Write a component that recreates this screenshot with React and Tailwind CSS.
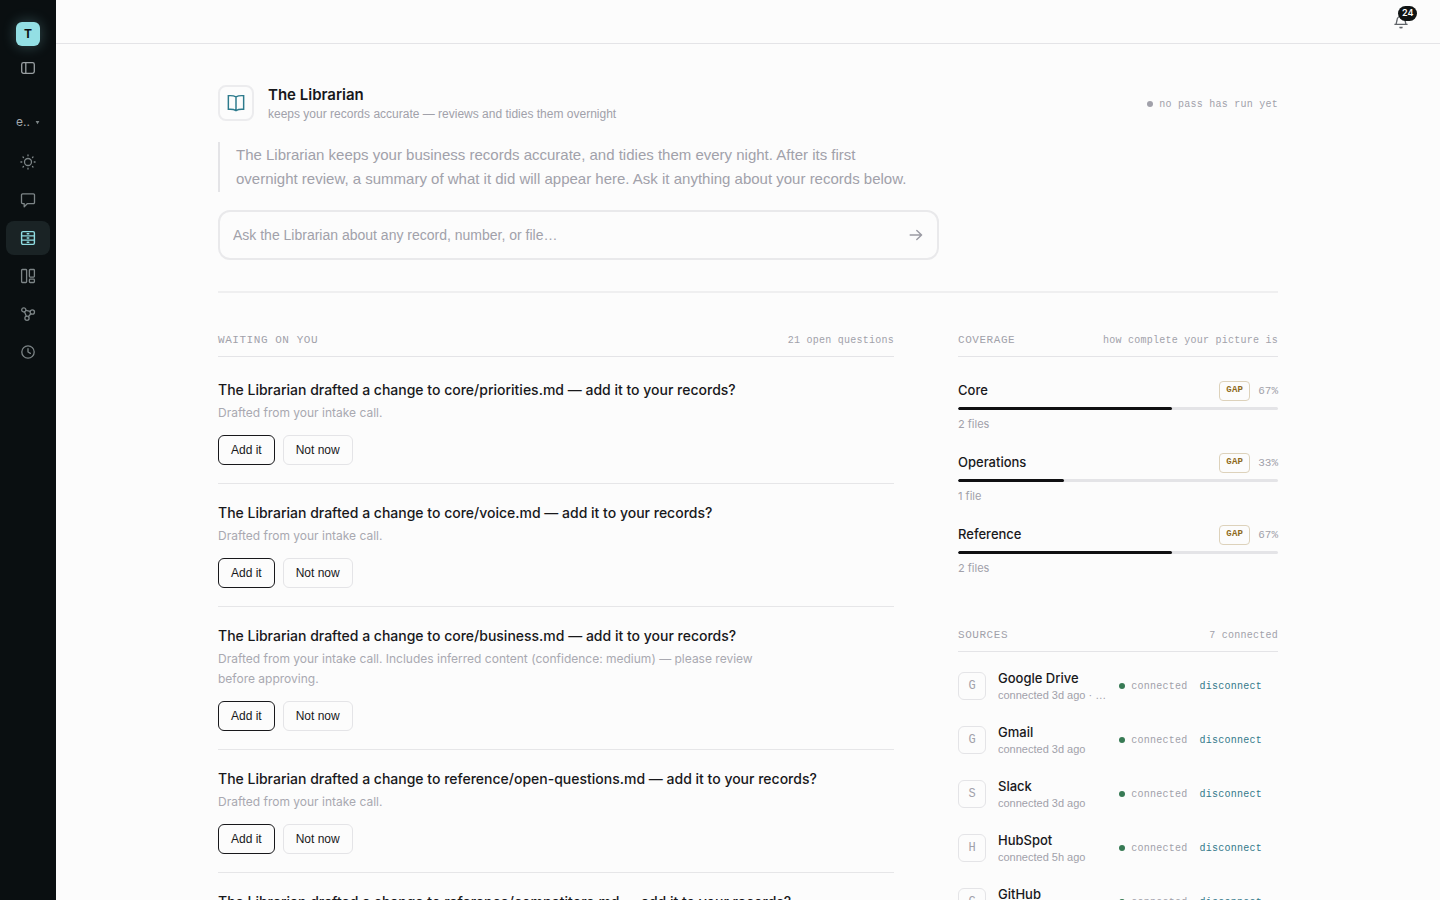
import React from "react";

const ICON = {
  width: 16,
  height: 16,
  viewBox: "0 0 16 16",
  fill: "none",
  stroke: "currentColor",
  strokeWidth: 1.3,
  strokeLinecap: "round",
  strokeLinejoin: "round",
  "aria-hidden": true,
};

const PanelIcon = () => (
  <svg {...ICON}>
    <rect x="1.7" y="2.6" width="12.6" height="10.8" rx="1.8" />
    <path d="M5.8 2.6v10.8" />
  </svg>
);
const SunIcon = () => (
  <svg {...ICON}>
    <circle cx="8" cy="8" r="3.5" />
    <path d="M8 .9v.9M8 14.2v.9M.9 8h.9M14.2 8h.9M3 3l.5.5M12.5 12.5l.5.5M3 13l.5-.5M12.5 3.5L13 3" />
  </svg>
);
const ChatIcon = () => (
  <svg {...ICON}>
    <path d="M2.6 1.9h10.8a1.1 1.1 0 0 1 1.1 1.1v7.6a1.1 1.1 0 0 1-1.1 1.1H7.2L4.2 14.8v-3.1H2.6a1.1 1.1 0 0 1-1.1-1.1V3a1.1 1.1 0 0 1 1.1-1.1z" />
  </svg>
);
const CabinetIcon = () => (
  <svg {...ICON} strokeWidth="1.4">
    <rect x="1.6" y="1.6" width="12.8" height="12.8" rx="1.3" />
    <path d="M1.6 5.9h12.8M1.6 10.1h12.8M7.2 3.8h1.6M7.2 8h1.6M7.2 12.2h1.6" />
  </svg>
);
const BoardIcon = () => (
  <svg {...ICON}>
    <rect x="1.6" y="1.5" width="5" height="13" rx=".8" />
    <rect x="9.4" y="1.5" width="5" height="7.6" rx=".8" />
    <rect x="9.4" y="11.2" width="5" height="3.3" rx=".8" />
  </svg>
);
const GraphIcon = () => (
  <svg {...ICON}>
    <circle cx="3.8" cy="3.9" r="2.1" />
    <circle cx="12.3" cy="6" r="2.2" />
    <circle cx="7" cy="12.3" r="2.1" />
    <path d="M5.9 4.4l4.3 1M4.6 5.9l1.7 4.4M10.9 7.7l-2.6 3" />
  </svg>
);
const ClockIcon = () => (
  <svg {...ICON}>
    <circle cx="8" cy="8" r="6.2" />
    <path d="M8 4.6V8l2.4 1.4" />
  </svg>
);
const BellIcon = () => (
  <svg {...ICON} strokeLinecap="butt" strokeLinejoin="miter">
    <path d="M1.4 10.4h13.2M3 10.4l1-4a4 4 0 0 1 8 0l1 4" />
    <path d="M6.4 13.5h3.2M8 12.9v1.6" />
  </svg>
);
const BookIcon = () => (
  <svg {...ICON} width="18" height="18" strokeWidth="1.3" strokeLinejoin="miter">
    <path d="M8 2.6C6.3 1.6 3.6 1.3 1.2 1.5v12.1c2.6-.2 5.1.1 6.8 1.1 1.7-1 4.2-1.3 6.8-1.1V1.5C12.4 1.3 9.7 1.6 8 2.6zM8 2.6v12" />
  </svg>
);
const ArrowIcon = () => (
  <svg {...ICON} strokeWidth="1.4">
    <path d="M2.2 8h11.4M8.8 3.4L13.6 8l-4.8 4.6" />
  </svg>
);

const NAV = [
  { label: "Today", Icon: SunIcon },
  { label: "Chat", Icon: ChatIcon },
  { label: "Records", Icon: CabinetIcon, active: true },
  { label: "Boards", Icon: BoardIcon },
  { label: "Graph", Icon: GraphIcon },
  { label: "History", Icon: ClockIcon },
];

const QUESTIONS = [
  { file: "core/priorities.md" },
  { file: "core/voice.md" },
  {
    file: "core/business.md",
    note: " Includes inferred content (confidence: medium) — please review before approving.",
  },
  { file: "reference/open-questions.md" },
  { file: "reference/competitors.md" },
];

const COVERAGE = [
  { name: "Core", value: 67, files: "2 files" },
  { name: "Operations", value: 33, files: "1 file" },
  { name: "Reference", value: 67, files: "2 files" },
];

const SOURCES = [
  { name: "Google Drive", detail: "connected 3d ago · synced" },
  { name: "Gmail", detail: "connected 3d ago" },
  { name: "Slack", detail: "connected 3d ago" },
  { name: "HubSpot", detail: "connected 5h ago" },
  { name: "GitHub", detail: "connected 5h ago" },
];

const MONO = "font-['Liberation_Mono',monospace]";
const BODY = "font-['Liberation_Sans',sans-serif]";

function Sidebar() {
  return (
    <aside className="flex w-14 shrink-0 flex-col items-center bg-[#0a0f11] pt-[22px] text-[#7d8587]">
      <div className="flex size-6 items-center justify-center rounded-md bg-[#93dfe4] text-xs font-bold text-[#0a0f11] shadow-[0_0_14px_rgba(147,223,228,0.3)]">
        T
      </div>
      <button type="button" aria-label="Toggle sidebar" className="mt-[14px] text-[#9aa0a3]">
        <PanelIcon />
      </button>
      <button
        type="button"
        aria-label="Switch workspace"
        className="mt-[38px] flex h-4 w-full items-center justify-between pr-4 pl-4 text-xs text-[#a3a9ac]"
      >
        <span>e..</span>
        <svg width="5" height="5" viewBox="0 0 5 5" fill="#7d8587" aria-hidden="true">
          <path d="M.6 1h3.8L2.5 4.2z" />
        </svg>
      </button>
      <nav aria-label="Main" className="mt-[15px] flex w-full flex-col gap-1 px-[6px]">
        {NAV.map(({ label, Icon, active }) => (
          <a
            key={label}
            href="#"
            aria-label={label}
            aria-current={active ? "page" : undefined}
            className={
              active
                ? "flex h-[34px] items-center justify-center rounded-lg bg-[#1a2325] text-[#8fdce2]"
                : "flex h-[34px] items-center justify-center rounded-lg"
            }
          >
            <Icon />
          </a>
        ))}
      </nav>
    </aside>
  );
}

function SectionHeader({ title, aside }) {
  return (
    <div className={`flex items-baseline justify-between border-b border-[#e4e4e7] pb-[7px] ${MONO}`}>
      <h2 className="text-[11px] leading-4 tracking-wider text-[#a1a1aa]">{title}</h2>
      <span className="text-[10px] leading-4 tracking-wide text-[#a1a1aa]">{aside}</span>
    </div>
  );
}

function Question({ file, note = "" }) {
  return (
    <li className="border-b border-[#e6e6e8] pt-[18px] pb-[18px]">
      <h3 className="text-sm leading-[22px] font-medium text-[#18181b]">
        The Librarian drafted a change to {file} — add it to your records?
      </h3>
      <p className="mt-[2px] max-w-[560px] text-xs leading-5 text-[#a9a9b1]">
        Drafted from your intake call.{note}
      </p>
      <div className={`mt-3 flex gap-2 text-xs text-[#18181b] ${BODY}`}>
        <button type="button" className="h-[30px] rounded-md border border-[#18181b] px-3">
          Add it
        </button>
        <button type="button" className="h-[30px] rounded-md border border-[#e4e4e7] px-3">
          Not now
        </button>
      </div>
    </li>
  );
}

function CoverageRow({ name, value, files }) {
  return (
    <li className="h-[72px]">
      <div className="flex h-5 items-center">
        <span className="flex-1 text-[13px] font-medium text-[#18181b]">{name}</span>
        <span
          className={`flex h-5 items-center rounded border border-[#ddd2bb] px-[6px] text-[9px] font-bold tracking-wide text-[#8f6a1d] ${MONO}`}
        >
          GAP
        </span>
        <span className={`ml-2 text-[11px] text-[#a1a1aa] ${MONO}`}>{value}%</span>
      </div>
      <div className="mt-[6px] h-[3px] overflow-hidden rounded-full bg-[#e4e4e7]">
        <div className="h-full rounded-full bg-[#101012]" style={{ width: `${value}%` }} />
      </div>
      <p className="mt-[6px] text-[11px] leading-4 text-[#a1a1aa]">{files}</p>
    </li>
  );
}

function SourceRow({ name, detail }) {
  return (
    <li className="flex h-[54px] items-center pr-4">
      <span
        className={`flex size-7 shrink-0 items-center justify-center rounded-md border border-[#e4e4e7] text-xs text-[#a1a1aa] ${MONO}`}
      >
        {name[0]}
      </span>
      <div className="ml-3 min-w-0 flex-1">
        <p className="truncate text-[13px] leading-[18px] font-medium text-[#18181b]">{name}</p>
        <p className={`truncate text-[11px] leading-4 text-[#a1a1aa] ${BODY}`}>{detail}</p>
      </div>
      <span className={`ml-3 flex items-center gap-[6px] text-[10px] tracking-wide text-[#a1a1aa] ${MONO}`}>
        <span className="size-[6px] rounded-full bg-[#377a54]" />
        connected
      </span>
      <button type="button" className={`ml-3 text-[10px] tracking-wide text-[#32788a] ${MONO}`}>
        disconnect
      </button>
    </li>
  );
}

export default function App() {
  return (
    <div className="flex h-screen bg-[#fcfcfc] font-['Inter',sans-serif] text-[#18181b]">
      <Sidebar />
      <div className="flex min-w-0 flex-1 flex-col">
        <header className="flex h-11 shrink-0 items-center justify-end border-b border-[#e4e4e7] pr-[31px]">
          <button type="button" aria-label="Notifications, 24 unread" className="relative text-[#5f6368]">
            <BellIcon />
            <span className="absolute -top-2 left-[5px] flex h-[15px] items-center rounded-full bg-[#101414] px-1 text-[9px] font-semibold text-white">
              24
            </span>
          </button>
        </header>
        <main className="flex-1 overflow-y-auto px-8 [scrollbar-width:none]">
          <div className="mx-auto max-w-[1060px] pt-10">
            <section>
              <div className="flex items-start">
                <div className="mt-px flex size-9 items-center justify-center rounded-lg border-2 border-[#ececee] text-[#2c7a8c]">
                  <BookIcon />
                </div>
                <div className="ml-[14px] flex-1 py-px">
                  <h1 className="text-[15px] leading-5 font-semibold">The Librarian</h1>
                  <p className={`text-xs leading-[18px] text-[#a1a1aa] ${BODY}`}>
                    keeps your records accurate — reviews and tidies them overnight
                  </p>
                </div>
                <span
                  className={`flex items-center gap-[6px] self-center text-[10px] tracking-wide text-[#a1a1aa] ${MONO}`}
                >
                  <span className="size-[6px] rounded-full bg-[#a1a1aa]" />
                  no pass has run yet
                </span>
              </div>
              <p
                className={`mt-[18px] max-w-[700px] border-l-2 border-[#e4e4e7] py-px pl-4 text-[15px] leading-6 text-[#a1a1aa] ${BODY}`}
              >
                The Librarian keeps your business records accurate, and tidies them every night. After its first
                overnight review, a summary of what it did will appear here. Ask it anything about your records below.
              </p>
              <form className="mt-[18px] flex h-[50px] max-w-[721px] items-center rounded-xl border-2 border-[#e9e9eb] pr-[13px] pl-[13px]">
                <input
                  type="text"
                  aria-label="Ask the Librarian"
                  placeholder="Ask the Librarian about any record, number, or file…"
                  className={`min-w-0 flex-1 bg-transparent text-sm outline-none placeholder:text-[#a1a1aa] ${BODY}`}
                />
                <button type="button" aria-label="Send" className="text-[#9a9aa3]">
                  <ArrowIcon />
                </button>
              </form>
            </section>
            <div className="mt-[31px] grid grid-cols-[minmax(0,1fr)_320px] gap-16 border-t-2 border-[#efeff0] pt-[39px]">
              <section>
                <SectionHeader title="WAITING ON YOU" aside="21 open questions" />
                <ul className="pt-1">
                  {QUESTIONS.map((q) => (
                    <Question key={q.file} {...q} />
                  ))}
                </ul>
              </section>
              <div>
                <section>
                  <SectionHeader title="COVERAGE" aside="how complete your picture is" />
                  <ul className="pt-6">
                    {COVERAGE.map((c) => (
                      <CoverageRow key={c.name} {...c} />
                    ))}
                  </ul>
                </section>
                <section className="mt-[30px]">
                  <SectionHeader title="SOURCES" aside="7 connected" />
                  <ul className="pt-[7px]">
                    {SOURCES.map((s) => (
                      <SourceRow key={s.name} {...s} />
                    ))}
                  </ul>
                </section>
              </div>
            </div>
          </div>
        </main>
      </div>
    </div>
  );
}
